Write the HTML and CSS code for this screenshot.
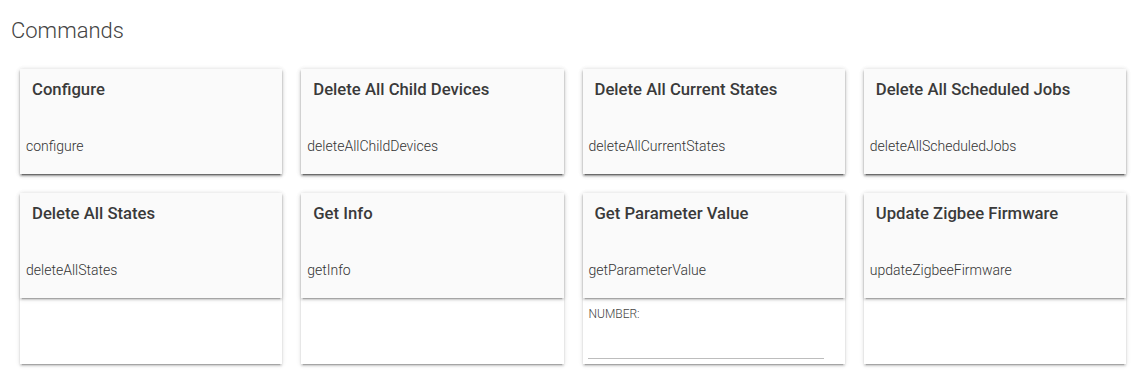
FILE: index.html
```html
<!DOCTYPE html>
<html>
<head>
<meta charset="utf-8">
<link rel="stylesheet" href="styles.css">
</head>
<body>
<div class="page">
  <h2 class="section-title">Commands</h2>
  <div class="cmd-grid">
    <div class="card">
      <div class="cmd-head">
        <div class="cmd-title">Configure</div>
        <div class="cmd-name">configure</div>
      </div>
    </div>
    <div class="card">
      <div class="cmd-head">
        <div class="cmd-title">Delete All Child Devices</div>
        <div class="cmd-name">deleteAllChildDevices</div>
      </div>
    </div>
    <div class="card">
      <div class="cmd-head">
        <div class="cmd-title">Delete All Current States</div>
        <div class="cmd-name">deleteAllCurrentStates</div>
      </div>
    </div>
    <div class="card">
      <div class="cmd-head">
        <div class="cmd-title">Delete All Scheduled Jobs</div>
        <div class="cmd-name">deleteAllScheduledJobs</div>
      </div>
    </div>
    <div class="card">
      <div class="cmd-head">
        <div class="cmd-title">Delete All States</div>
        <div class="cmd-name">deleteAllStates</div>
      </div>
    </div>
    <div class="card">
      <div class="cmd-head">
        <div class="cmd-title">Get Info</div>
        <div class="cmd-name">getInfo</div>
      </div>
    </div>
    <div class="card">
      <div class="cmd-head">
        <div class="cmd-title">Get Parameter Value</div>
        <div class="cmd-name">getParameterValue</div>
      </div>
      <div class="cmd-params">
        <label class="param-label">NUMBER:</label>
        <input class="param-input" type="text">
      </div>
    </div>
    <div class="card">
      <div class="cmd-head">
        <div class="cmd-title">Update Zigbee Firmware</div>
        <div class="cmd-name">updateZigbeeFirmware</div>
      </div>
    </div>
  </div>
</div>
</body>
</html>
```

FILE: styles.css
```css
html, body {
  margin: 0;
  padding: 0;
  background: #ffffff;
}

body {
  font-family: Roboto, "Liberation Sans", sans-serif;
  color: #333;
}

.page {
  padding: 0 13px 13px 0;
}

.section-title {
  margin: 0;
  padding: 19px 0 0 11px;
  font-size: 22px;
  line-height: 24px;
  font-weight: 300;
  color: #444;
}

.cmd-grid {
  display: grid;
  grid-template-columns: repeat(4, 1fr);
  column-gap: 19px;
  row-gap: 19px;
  padding: 26px 0 0 20px;
}

.card {
  display: flex;
  flex-direction: column;
  background: #fff;
  box-shadow: 0 2px 2px 0 rgba(0,0,0,.14), 0 3px 1px -2px rgba(0,0,0,.2), 0 1px 5px 0 rgba(0,0,0,.12);
}

.cmd-head {
  height: 105px;
  box-sizing: border-box;
  padding: 11px 6px 0 6px;
  background: #fafafa;
  box-shadow: 0 2px 2px 0 rgba(0,0,0,.14), 0 3px 1px -2px rgba(0,0,0,.2), 0 1px 5px 0 rgba(0,0,0,.12);
  position: relative;
  z-index: 1;
}

.cmd-title {
  padding-left: 6px;
  font-size: 16.7px;
  line-height: 20px;
  font-weight: 500;
  color: #3a3a3a;
}

.cmd-name {
  margin-top: 36px;
  font-size: 14px;
  line-height: 20px;
  font-weight: 300;
  color: #333;
}

.cmd-params {
  display: flex;
  flex-direction: column;
  padding: 8px 21px 5px 5px;
}

.param-label {
  font-size: 12px;
  line-height: 16px;
  font-weight: 300;
  color: #444;
  padding-left: 1px;
}

.param-input {
  height: 37px;
  box-sizing: border-box;
  border: none;
  border-bottom: 1px solid #bdbdbd;
  background: transparent;
  outline: none;
  padding: 0;
  font-family: inherit;
}
```
